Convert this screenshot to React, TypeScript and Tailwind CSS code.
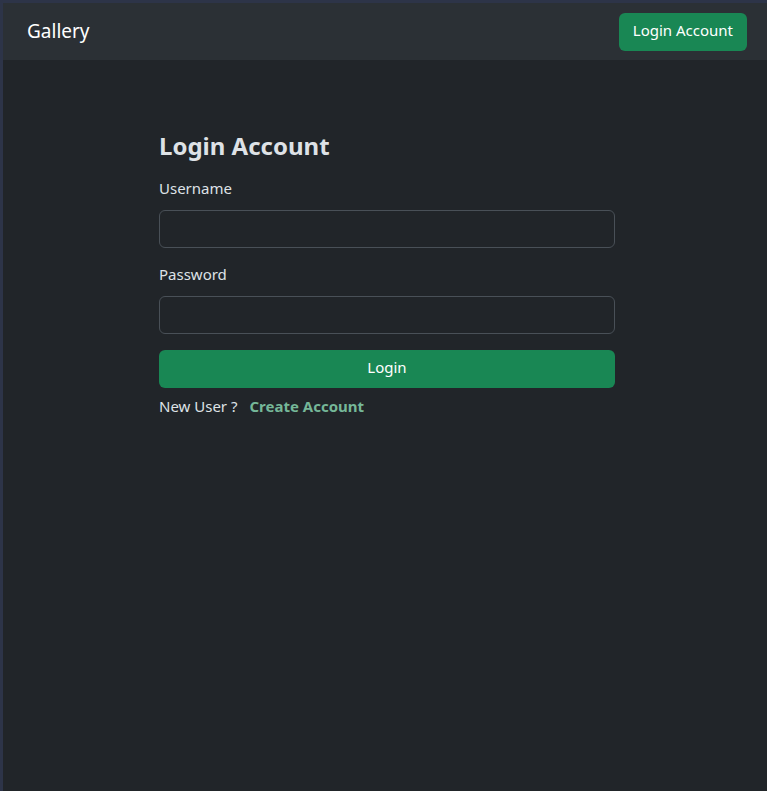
import { useState } from 'react'

export default function App() {
  const [username, setUsername] = useState('')
  const [password, setPassword] = useState('')

  return (
    <div
      className="flex h-screen flex-col border-l-[3px] border-t-[3px] border-[#2d3448] bg-[#212529] text-[#dee2e6]"
      style={{ fontFamily: '"Noto Sans", "Open Sans", sans-serif' }}
    >
      <nav className="flex h-[57px] shrink-0 items-center justify-between bg-[#2b3035] pl-6 pr-5">
        <a href="#" className="text-[19px] text-white">
          Gallery
        </a>
        <button
          type="button"
          className="h-[38px] rounded-md bg-[#198754] px-[14px] pb-[2px] text-[15px] text-white"
        >
          Login Account
        </button>
      </nav>

      <main className="ml-[156px] w-[456px] pt-[71px]">
        <h3 className="text-[24px] font-bold leading-[30px] text-[#dee2e6]">Login Account</h3>

        <form className="mt-[15px]" onSubmit={(e) => e.preventDefault()}>
          <label htmlFor="username" className="block text-[15px] leading-6">
            Username
          </label>
          <input
            id="username"
            value={username}
            onChange={(e) => setUsername(e.target.value)}
            className="mt-[10px] block h-[38px] w-full rounded-md border border-[#495057] bg-[#212529] px-3 text-white outline-none"
          />

          <label htmlFor="password" className="mt-[14px] block text-[15px] leading-6">
            Password
          </label>
          <input
            id="password"
            type="password"
            value={password}
            onChange={(e) => setPassword(e.target.value)}
            className="mt-[10px] block h-[38px] w-full rounded-md border border-[#495057] bg-[#212529] px-3 text-white outline-none"
          />

          <button
            type="submit"
            className="mt-[16px] h-[38px] w-full rounded-md bg-[#198754] pb-[3px] text-[15px] text-white"
          >
            Login
          </button>
        </form>

        <p className="mt-[6px] text-[15px] leading-6">
          New User ?
          <a href="#" className="ml-3 font-bold text-[#75b798]">
            Create Account
          </a>
        </p>
      </main>
    </div>
  )
}
